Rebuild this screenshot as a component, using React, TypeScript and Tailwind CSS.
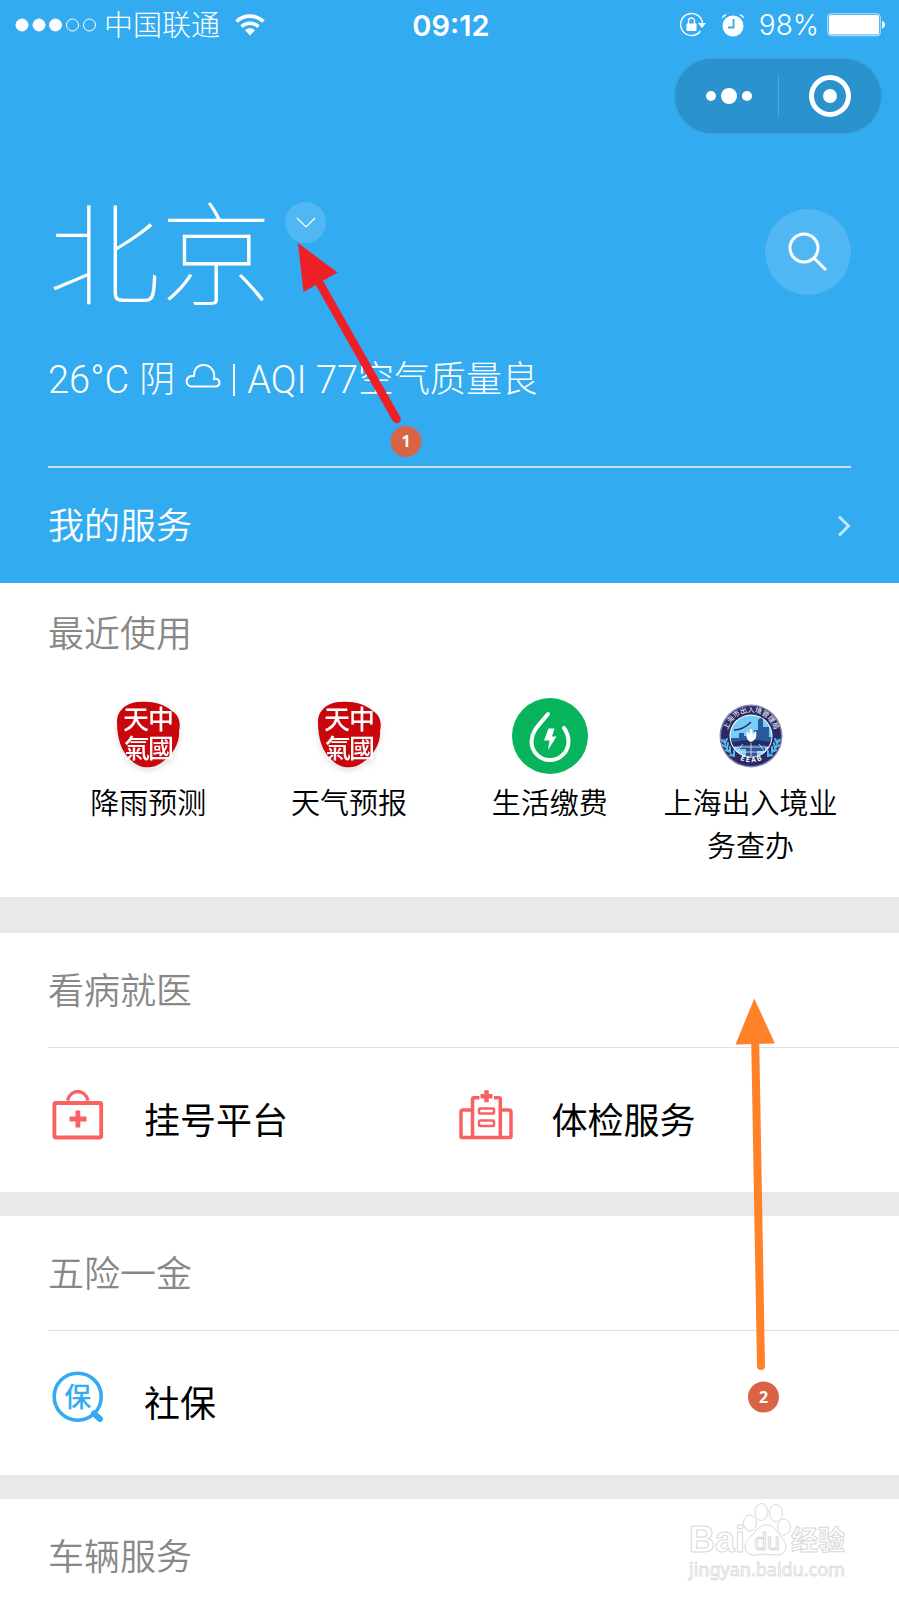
import type { ReactNode } from 'react';

interface RecentApp {
  name: string;
  icon: ReactNode;
}

interface Service {
  name: string;
  icon: ReactNode;
}

function SignalDots(): JSX.Element {
  return (
    <svg width="82" height="16" viewBox="0 0 82 16" fill="white" stroke="white" aria-hidden="true">
      <circle cx="7" cy="8" r="6" />
      <circle cx="24" cy="8" r="6" />
      <circle cx="40.500" cy="8" r="6" />
      <circle cx="57.500" cy="8" r="6" fill="none" />
      <circle cx="74.500" cy="8" r="6" fill="none" />
    </svg>
  );
}

function WifiIcon(): JSX.Element {
  return (
    <svg width="30" height="22" viewBox="0 0 30 22" fill="none" stroke="white" strokeWidth="3.6" aria-hidden="true">
      <path d="M1.5 7.5C9 .3 21 .3 28.500 7.500" />
      <path d="M6.500 12.600c5-4.400 12-4.400 17 0" />
      <path d="M15 21.500l-5-5.200c3-2.600 7-2.600 10 0z" fill="white" stroke="none" />
    </svg>
  );
}

function RotationLockIcon(): JSX.Element {
  return (
    <svg width="28" height="26" viewBox="0 0 28 26" fill="none" stroke="white" strokeWidth="1.400" aria-hidden="true">
      <path d="M23.500 11A11 11 0 1 0 21.500 19" />
      <path d="M19 11h8l-4 5z" fill="white" stroke="none" />
      <rect x="7.500" y="11.500" width="10" height="7.500" rx=".8" fill="white" stroke="none" />
      <path d="M9.500 12V9a3 3 0 0 1 6 0v3" />
    </svg>
  );
}

function AlarmIcon(): JSX.Element {
  return (
    <svg width="24" height="24" viewBox="0 0 24 24" aria-hidden="true">
      <circle cx="12" cy="13" r="10.500" fill="white" />
      <path d="M1 5.500C1 2.500 3 1 6 1.500zM23 5.500c0-3-2-4.500-5-4z" fill="white" />
      <path d="M12.500 6v8.500H7" fill="none" stroke="#33abf0" strokeWidth="1.800" />
    </svg>
  );
}

function BatteryIcon(): JSX.Element {
  return (
    <svg width="60" height="24" viewBox="0 0 60 24" fill="none" aria-hidden="true">
      <rect x=".75" y=".75" width="52.500" height="22" rx="3" stroke="#c2e6fb" strokeWidth="1" />
      <rect x="2" y="2" width="50" height="19.500" rx="1.500" fill="white" />
      <path d="M55 8c4 1 4 6.500 0 7.500z" fill="white" />
    </svg>
  );
}

function CloudIcon(): JSX.Element {
  return (
    <svg width="36" height="34" viewBox="0 0 36 34" fill="none" stroke="white" strokeWidth="2" aria-hidden="true">
      <path d="M6 23.500C-.5 22.500 0 12 9 13 9 5.500 13 2 18.500 2c7 0 12 6 10.500 14 3-1 5.500 1 5.500 3.500 0 3-2 4-4.500 4z" />
    </svg>
  );
}

function SealIcon(): JSX.Element {
  return (
    <svg width="76" height="76" viewBox="0 0 76 76" className="drop-shadow-md" aria-hidden="true">
      <path d="M7 24C7 12 17 4 30 4c12-1 24 2 32 9 7 4 9 12 7 20 1 12-6 24-18 32-8 6-21 6-29-2C11 54 7 40 7 24z" fill="#c8060c" />
      <text x="13 38 14 38" y="31 31 60 60" fontSize="26" fontWeight="500" fontFamily="'Noto Sans CJK TC'" fill="white">
        天中氣國
      </text>
    </svg>
  );
}

function UtilityIcon(): JSX.Element {
  return (
    <svg width="76" height="76" viewBox="0 0 76 76" fill="none" aria-hidden="true">
      <circle cx="38" cy="38" r="38" fill="#07b35b" />
      <path d="M36 16C27 27 19.500 33 19.500 43.500a18.500 18.500 0 0 0 37 0c0-6-2-10-4.500-13.500" stroke="white" strokeWidth="4" strokeLinecap="round" strokeLinejoin="round" />
      <path d="M36.500 30.500h6l-2.500 8h4.500L36 52l1.500-9.500H32z" fill="white" />
    </svg>
  );
}

function EmblemIcon(): JSX.Element {
  return (
    <svg width="76" height="76" viewBox="0 0 76 76" aria-hidden="true">
      <defs>
        <path id="emblem-top" d="M14.500 43a24 24 0 1 1 47 0" />
        <path id="emblem-bottom" d="M17 55a28.500 28.500 0 0 0 42 0" />
        <clipPath id="emblem-view">
          <circle cx="38" cy="38" r="20.500" />
        </clipPath>
      </defs>
      <circle cx="38" cy="38" r="31.500" fill="#8788b4" />
      <circle cx="38" cy="38" r="30" fill="#292965" />
      <circle cx="38" cy="38" r="21.500" fill="white" />
      <g clipPath="url(#emblem-view)">
        <path d="M16 16h44v44H16z" fill="#78cdf2" />
        <path d="M18 40h8v-5h5v3h10v-6h4V22l5-4v11h6v10h5v6H18z" fill="#285b9b" />
        <path d="M17 45c14-4 29-4 43 0v4H17z" fill="#252c68" />
        <path d="M33 60v-9h-7v-4h26v6h-8v8z" fill="#31549a" />
        <path d="M38 44c-5-2-5-6-4-11 2 2 2 4 2 5l1-7h2l1 7c0-2 1-4 3-5 1 6 0 9-5 11z" fill="white" />
        <path d="M21 32c6 0 11-2 17-8" fill="none" stroke="#252c68" strokeWidth="1.500" />
        <path d="M18 49h41M22 54h33M30 46l-9 12M38 45v15M46 46l9 12" fill="none" stroke="white" strokeWidth=".7" />
      </g>
      <g fill="none" stroke="#58b8e6" strokeWidth="2" strokeLinecap="round">
        <path d="M11 41c1 7 4 12 9 16M65 41c-1 7-4 12-9 16" strokeWidth="1" />
        <path d="M9 42l3 3 2-4M10 47l4 3 1-5M13 52l4 2v-5M17 57l4 1v-5" />
        <path d="M67 42l-3 3-2-4M66 47l-4 3-1-5M63 52l-4 2v-5M59 57l-4 1v-5" />
      </g>
      <g fill="white" fontFamily="'Noto Sans CJK SC'" textAnchor="middle">
        <text fontSize="7">
          <textPath href="#emblem-top" startOffset="50%">上海市出入境管理局</textPath>
        </text>
        <text fontSize="7" fontWeight="700">
          <textPath href="#emblem-bottom" startOffset="50%">E E A B</textPath>
        </text>
      </g>
    </svg>
  );
}

function MedicalBagIcon(): JSX.Element {
  return (
    <svg width="60" height="64" viewBox="0 0 60 64" fill="none" stroke="#fa6060" strokeWidth="3.800" aria-hidden="true">
      <rect x="6.400" y="15" width="46.800" height="34.500" rx="1.500" />
      <path d="M19.500 12.500C22.500 .5 37 .5 40 12.500" strokeWidth="3.400" />
      <path d="M21.500 31h17M29.900 22.500v17" strokeWidth="4.800" />
    </svg>
  );
}

function HospitalIcon(): JSX.Element {
  return (
    <svg width="60" height="64" viewBox="0 0 60 64" fill="none" stroke="#fa6060" strokeWidth="3.500" aria-hidden="true">
      <path d="M16.500 49.500H6A1 1 0 0 1 5 48.500V24a2 2 0 0 1 2-2h9.500" />
      <path d="M44.300 49.500H54a1 1 0 0 0 1-1V24a2 2 0 0 0-2-2h-8.700" />
      <path d="M23.500 9.800H18a1.500 1.500 0 0 0-1.500 1.500v38.200h27.800V11.300a1.500 1.500 0 0 0-1.500-1.500H38" />
      <path d="M24.500 8.300h12M30.500 2.300v12" strokeWidth="4.500" />
      <rect x="23" y="20.500" width="15" height="5" rx="1" strokeWidth="2.500" />
      <rect x="23" y="32.500" width="15" height="5.500" rx="1" strokeWidth="2.500" />
    </svg>
  );
}

function InsuranceIcon(): JSX.Element {
  return (
    <svg width="60" height="64" viewBox="0 0 60 64" fill="none" aria-hidden="true">
      <circle cx="29.700" cy="25.700" r="23.500" stroke="#33abf0" strokeWidth="3.600" />
      <path d="M46 42.500l6 5.500" stroke="#33abf0" strokeWidth="6" strokeLinecap="round" />
      <text x="29.700" y="36" fontSize="27" fontFamily="'Noto Sans CJK SC'" fontWeight="500" textAnchor="middle" fill="#33abf0">
        保
      </text>
    </svg>
  );
}

function Watermark(): JSX.Element {
  return (
    <svg width="170" height="84" viewBox="0 0 170 84" fill="white" stroke="#d9d9d9" strokeWidth="1" aria-hidden="true">
      <text x="4" y="50" fontSize="36" fontFamily="'Liberation Sans'" fontWeight="700">Bai</text>
      <ellipse cx="65" cy="21" rx="6.500" ry="8" />
      <ellipse cx="76.500" cy="10" rx="6.500" ry="8.500" />
      <ellipse cx="91" cy="11" rx="6.500" ry="8.500" />
      <ellipse cx="99" cy="25" rx="6.500" ry="8" />
      <path d="M82 23c8 0 9 7 14 12 8 7 6 18-4 18-7 0-13-2-20 0-12 2-16-10-7-18 6-5 8-12 17-12z" />
      <text x="82" y="48" fontSize="23" fontFamily="'Liberation Sans'" textAnchor="middle">du</text>
      <text x="106" y="48" fontSize="27" fontFamily="'Noto Sans CJK SC'" fontWeight="700">经验</text>
      <text x="4" y="74" fontSize="18" fontFamily="'Noto Sans'" strokeWidth=".8">jingyan.baidu.com</text>
    </svg>
  );
}

const recentApps: RecentApp[] = [
  { name: '降雨预测', icon: <SealIcon /> },
  { name: '天气预报', icon: <SealIcon /> },
  { name: '生活缴费', icon: <UtilityIcon /> },
  { name: '上海出入境业务查办', icon: <EmblemIcon /> },
];

const medical: Service[] = [
  { name: '挂号平台', icon: <MedicalBagIcon /> },
  { name: '体检服务', icon: <HospitalIcon /> },
];

const insurance: Service[] = [{ name: '社保', icon: <InsuranceIcon /> }];

function ServiceSection({ title, services }: { title: string; services: Service[] }): JSX.Element {
  return (
    <section>
      <h2 className="pt-[31px] pb-[29px] pl-12 text-4xl leading-[54px] font-[350] text-[#888888]">{title}</h2>
      {services.length > 0 && (
        <>
          <div className="ml-12 border-t border-[#dedede]" />
          <div className="grid grid-cols-2 pr-9 pl-12">
            {services.map((s) => (
              <a key={s.name} href="#" className="flex h-36 items-center gap-9 text-4xl text-black">
                {s.icon}
                <span className="pt-[2px]">{s.name}</span>
              </a>
            ))}
          </div>
        </>
      )}
    </section>
  );
}

function StatusBar(): JSX.Element {
  return (
    <div className="grid h-12 grid-cols-[1fr_auto_1fr] items-center pt-[2px] pr-3 pl-[15px] text-[29px] leading-none">
      <div className="flex items-center">
        <SignalDots />
        <span className="ml-[7px] font-light">中国联通</span>
        <span className="ml-[15px]">
          <WifiIcon />
        </span>
      </div>
      <time className="font-semibold">09:12</time>
      <div className="flex items-center justify-end">
        <RotationLockIcon />
        <span className="mr-[14px] ml-[14px]">
          <AlarmIcon />
        </span>
        <span className="mr-2 text-[28px] font-light">98%</span>
        <BatteryIcon />
      </div>
    </div>
  );
}

export default function App(): JSX.Element {
  return (
    <div className="relative min-h-screen overflow-hidden bg-white font-['Inter','Noto_Sans_CJK_SC',sans-serif]">
      <header className="bg-[#33abf0] text-white">
        <StatusBar />
        <div className="flex justify-end pt-[10px] pr-[17px]">
          <div className="flex h-[76px] w-52 items-center rounded-full border border-[#409dd0] bg-[#2a92cc]">
            <button type="button" aria-label="更多" className="flex w-1/2 items-center justify-center gap-[5px] pl-1">
              <span className="size-[10px] rounded-full bg-white" />
              <span className="size-4 rounded-full bg-white" />
              <span className="size-[10px] rounded-full bg-white" />
            </button>
            <span className="h-11 w-px bg-[#4da8da]" />
            <button type="button" aria-label="关闭" className="flex flex-1 justify-center">
              <span className="flex size-[42px] items-center justify-center rounded-full border-[5px] border-white">
                <span className="size-[14px] rounded-full bg-white" />
              </span>
            </button>
          </div>
        </div>

        <div className="mx-12 border-b-2 border-[#c2e6fb] pt-[66px] pb-[66px]">
          <div className="flex items-start">
            <h1 className="text-[112px] leading-none font-thin">北京</h1>
            <button
              type="button"
              aria-label="切换城市"
              className="mt-[2px] ml-[13px] flex size-[41px] items-center justify-center rounded-full bg-white/15"
            >
              <svg width="20" height="12" viewBox="0 0 20 12" fill="none" stroke="white" strokeWidth="1.200">
                <path d="M1 1l9 9 9-9" />
              </svg>
            </button>
            <button
              type="button"
              aria-label="搜索"
              className="mt-[9px] ml-auto flex size-[86px] items-center justify-center rounded-full bg-white/15"
            >
              <svg width="40" height="40" viewBox="0 0 40 40" fill="none" stroke="white" strokeWidth="3">
                <circle cx="16" cy="16" r="14" />
                <path d="M26 26l12 12" />
              </svg>
            </button>
          </div>
          <div className="mt-12 flex h-10 items-center font-['Roboto','Noto_Sans_CJK_SC',sans-serif] text-4xl leading-10 font-light whitespace-nowrap">
            <span className="text-[38px]">26°C</span>
            <span className="ml-[10px]">阴</span>
            <span className="mx-[10px]">
              <CloudIcon />
            </span>
            <span className="mr-3 ml-[2px] h-8 w-[2px] bg-white" />
            <span className="text-[38px]">AQI 77</span>
            <span>空气质量良</span>
          </div>
        </div>

        <a href="#" className="flex h-[115px] items-center justify-between px-12 text-4xl font-[350]">
          我的服务
          <svg width="14" height="22" viewBox="0 0 14 22" fill="none" stroke="#c2e6fb" strokeWidth="3">
            <path d="M2 1.500l9.500 9.500L2 20.500" />
          </svg>
        </a>
      </header>

      <main>
        <section className="pt-6 pb-[29px]">
          <h2 className="pl-12 text-4xl leading-[54px] font-[350] text-[#888888]">最近使用</h2>
          <div className="mt-[37px] grid grid-cols-4 px-12">
            {recentApps.map((app) => (
              <a key={app.name} href="#" className="flex flex-col items-center text-center text-black">
                {app.icon}
                <span className="mt-2 text-[29px] leading-[43px] font-[350]">{app.name}</span>
              </a>
            ))}
          </div>
        </section>
        <div className="h-9 bg-[#e9e9eb]" />
        <ServiceSection title="看病就医" services={medical} />
        <div className="h-6 bg-[#e9e9eb]" />
        <ServiceSection title="五险一金" services={insurance} />
        <div className="h-6 bg-[#e9e9eb]" />
        <ServiceSection title="车辆服务" services={[]} />
      </main>

      {/* step markers */}
      <svg className="pointer-events-none absolute top-[240px] left-[290px]" width="140" height="220" viewBox="290 240 140 220">
        <path d="M320 284L396.500 419" stroke="#ee1f27" strokeWidth="8.500" strokeLinecap="round" />
        <path d="M298 243l39.500 29.500L303.500 292z" fill="#ee1f27" />
        <circle cx="406" cy="441.500" r="15.500" fill="#d96445" />
        <text x="406" y="447" fontSize="16" fontWeight="700" fontFamily="'Open Sans'" textAnchor="middle" fill="white">1</text>
      </svg>
      <svg className="pointer-events-none absolute top-[990px] left-[730px]" width="60" height="430" viewBox="730 990 60 430">
        <path d="M755.200 1040L761 1366" stroke="#ff8128" strokeWidth="8" strokeLinecap="round" />
        <path d="M754.300 998.500L775 1043.500L735.500 1044.500z" fill="#ff8128" />
        <circle cx="763.500" cy="1397" r="15.500" fill="#d96445" />
        <text x="763.500" y="1402.500" fontSize="16" fontWeight="700" fontFamily="'Open Sans'" textAnchor="middle" fill="white">2</text>
      </svg>
      <div className="pointer-events-none absolute top-[1502px] left-[685px]">
        <Watermark />
      </div>
    </div>
  );
}
